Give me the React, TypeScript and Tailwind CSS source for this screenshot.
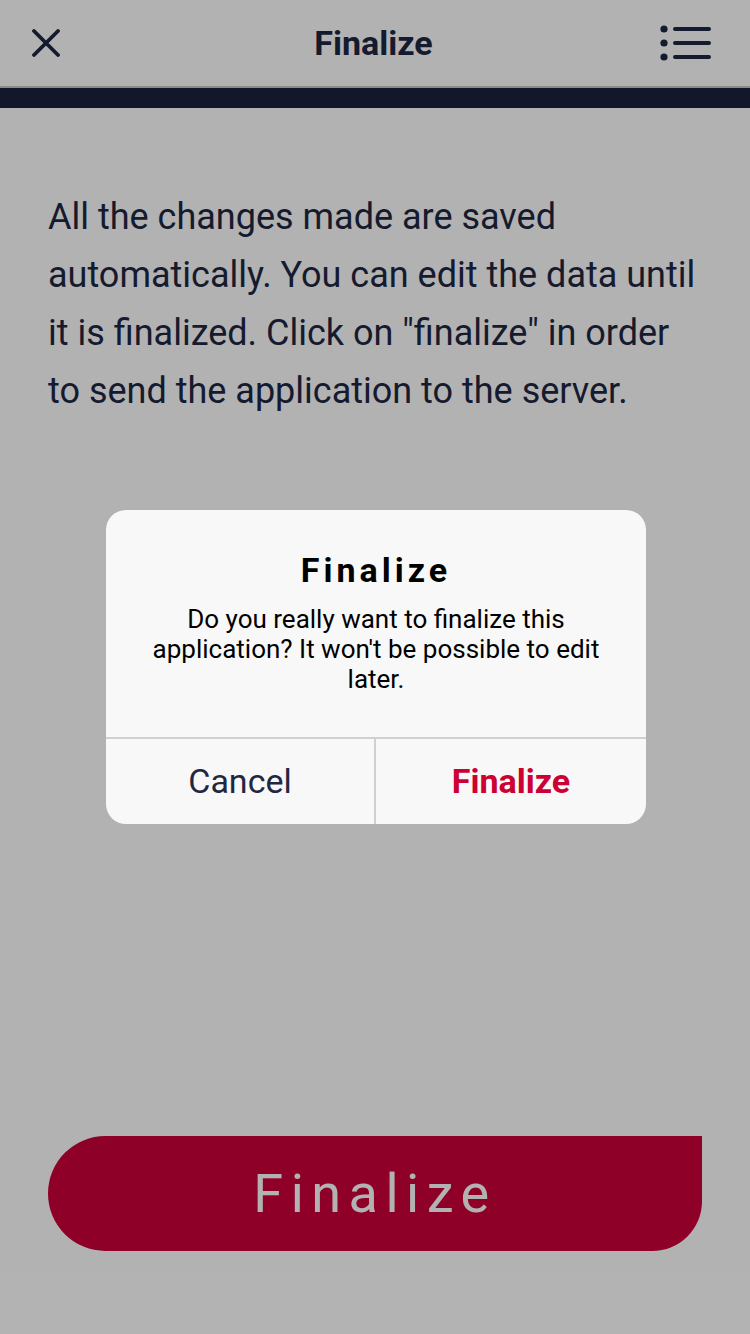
function CloseIcon() {
  return (
    <svg width="28" height="28" viewBox="0 0 28 28" fill="none">
      <path d="M2 2L26 26M26 2L2 26" stroke="#1f2842" strokeWidth="3.8" strokeLinecap="round" />
    </svg>
  );
}

function MenuIcon() {
  return (
    <svg width="52" height="36" viewBox="0 0 52 36" fill="none">
      <circle cx="4" cy="4" r="3.6" fill="#1f2842" />
      <circle cx="4" cy="18" r="3.6" fill="#1f2842" />
      <circle cx="4" cy="32" r="3.6" fill="#1f2842" />
      <path d="M15 4H49M15 18H49M15 32H49" stroke="#1f2842" strokeWidth="4" strokeLinecap="round" />
    </svg>
  );
}

export default function App() {
  return (
    <div
      className="relative w-[750px] h-[1334px] bg-white overflow-hidden"
      style={{ fontFamily: "Roboto, 'Noto Sans', sans-serif" }}
    >
      <header className="grid grid-cols-[1fr_auto_1fr] items-center h-[88px] pl-[32px] pr-[38px] border-b-2 border-[#c8c8c8]">
        <div className="flex">
          <CloseIcon />
        </div>
        <h1 className="text-[34px] font-bold text-[#1f2842] pl-[3px]">Finalize</h1>
        <div className="flex justify-end">
          <MenuIcon />
        </div>
      </header>
      <div className="h-[20px] bg-[#1a223b]" />

      <p className="px-[48px] mt-[80px] text-[36px] leading-[58px] text-[#1f2842]">
        All the changes made are saved automatically. You can edit the data until it is finalized. Click on "finalize" in order to send the application to the server.
      </p>

      <div className="absolute left-[48px] top-[1136px] w-[654px] h-[115px] flex items-center justify-center bg-[#cc0038] rounded-tl-[60px] rounded-bl-[60px] rounded-br-[52px]">
        <span className="text-[54px] tracking-[7.5px] text-white">Finalize</span>
      </div>

      {/* modal overlay */}
      <div className="absolute inset-0 bg-black/30 flex items-start justify-center pt-[510px] pl-[2px]">
        <div className="w-[540px] bg-[#f8f8f8] rounded-[20px] overflow-hidden">
          <div className="flex flex-col items-center px-[40px] pt-[40px] pb-[43px] text-center">
            <h2 className="text-[34px] font-bold tracking-[4px] text-black leading-[40px]">Finalize</h2>
            <p className="mt-[14px] text-[26px] leading-[30px] text-black">
              Do you really want to finalize this application? It won't be possible to edit later.
            </p>
          </div>
          <div className="grid grid-cols-2 border-t-2 border-[#d0d0d0] h-[87px]">
            <button className="text-[34px] text-[#1f2842] border-r-2 border-[#d0d0d0]">Cancel</button>
            <button className="text-[34px] font-bold text-[#cc0033]">Finalize</button>
          </div>
        </div>
      </div>
    </div>
  );
}
